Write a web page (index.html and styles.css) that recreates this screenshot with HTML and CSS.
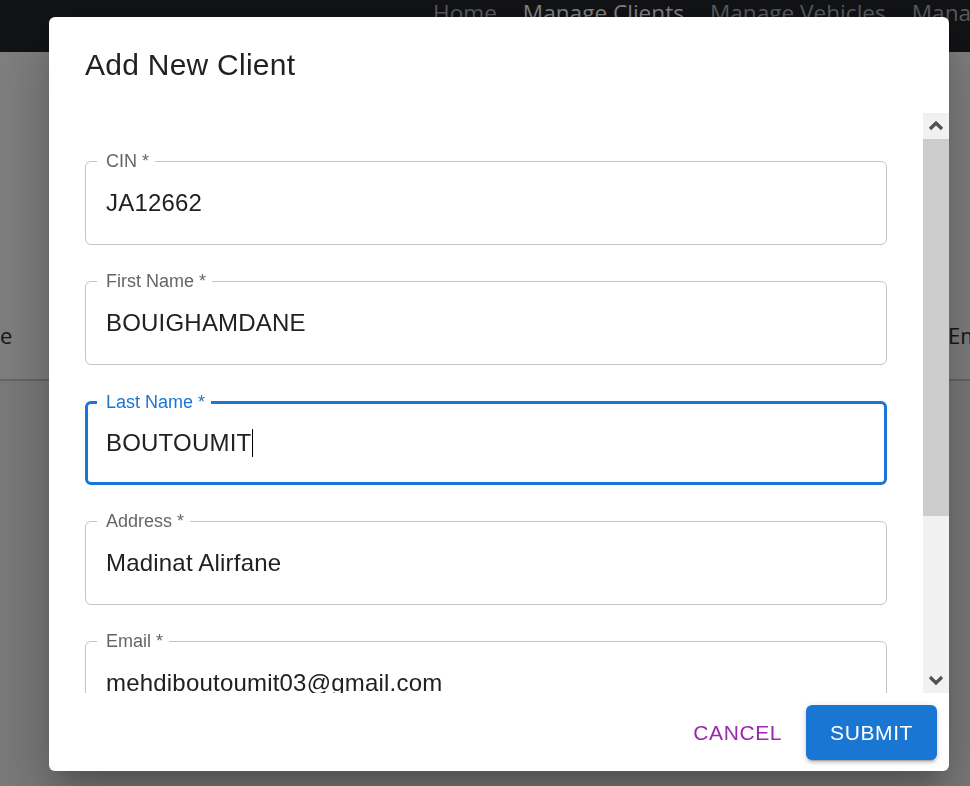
FILE: index.html
```html
<!DOCTYPE html>
<html lang="en">
<head>
<meta charset="utf-8">
<title>Add New Client</title>
<link rel="stylesheet" href="styles.css">
</head>
<body>
<div class="page">
  <header class="navbar">
    <nav class="nav">
      <span class="nav-link">Home</span>
      <span class="nav-link active">Manage Clients</span>
      <span class="nav-link">Manage Vehicles</span>
      <span class="nav-link">Manage Rentals</span>
    </nav>
  </header>
  <section class="bg-table">
    <div class="bg-row">
      <span class="bg-cell">e</span>
      <span class="bg-cell">Email</span>
    </div>
  </section>
  <section class="bg-rest"></section>
</div>

<div class="dialog" role="dialog">
  <h2 class="dialog-title">Add New Client</h2>
  <div class="dialog-body">
    <form class="fields">
      <fieldset class="outline">
        <legend class="label">CIN *</legend>
        <div class="value">JA12662</div>
      </fieldset>
      <fieldset class="outline">
        <legend class="label">First Name *</legend>
        <div class="value">BOUIGHAMDANE</div>
      </fieldset>
      <fieldset class="outline focused">
        <legend class="label">Last Name *</legend>
        <div class="value">BOUTOUMIT<span class="caret"></span></div>
      </fieldset>
      <fieldset class="outline">
        <legend class="label">Address *</legend>
        <div class="value">Madinat Alirfane</div>
      </fieldset>
      <fieldset class="outline">
        <legend class="label">Email *</legend>
        <div class="value">mehdiboutoumit03@gmail.com</div>
      </fieldset>
    </form>
    <div class="scrollbar">
      <div class="sb-btn">
        <svg width="26" height="26" viewBox="0 0 26 26"><polyline points="7,16 13,10 19,16" fill="none" stroke="#505050" stroke-width="3.2"/></svg>
      </div>
      <div class="sb-thumb"></div>
      <div class="sb-track"></div>
      <div class="sb-btn">
        <svg width="26" height="26" viewBox="0 0 26 26"><polyline points="7,10 13,16 19,10" fill="none" stroke="#505050" stroke-width="3.2"/></svg>
      </div>
    </div>
  </div>
  <div class="dialog-actions">
    <button class="btn btn-text" type="button">Cancel</button>
    <button class="btn btn-contained" type="button">Submit</button>
  </div>
</div>
</body>
</html>
```

FILE: styles.css
```css
* { box-sizing: border-box; }

html, body {
  margin: 0;
  padding: 0;
  width: 970px;
  height: 786px;
  overflow: hidden;
  background: #7c7c7c;
}

.page {
  display: flex;
  flex-direction: column;
  height: 786px;
  font-family: "Open Sans", "Liberation Sans", sans-serif;
}

.navbar {
  height: 52px;
  background: #121316;
  flex: none;
  overflow: hidden;
}

.nav {
  display: flex;
  gap: 26px;
  padding-left: 433px;
  white-space: nowrap;
  font-size: 22.6px;
  line-height: 26px;
}

.nav-link { color: #5b5b5b; }
.nav-link.active { color: #828282; }

.bg-table {
  height: 329px;
  flex: none;
  background: #808080;
  display: flex;
  align-items: flex-end;
  border-bottom: 2px solid #666666;
  overflow: hidden;
}

.bg-row {
  display: grid;
  grid-template-columns: 948px 200px;
  padding-bottom: 29px;
  font-size: 22px;
  line-height: 30px;
  color: #161616;
  white-space: nowrap;
}

.bg-rest {
  flex: 1;
  background: #7b7b7b;
}

/* Dialog (overlay) */
.dialog {
  position: fixed;
  left: 49px;
  top: 17px;
  width: 900px;
  height: 754px;
  background: #ffffff;
  border-radius: 6px;
  display: flex;
  flex-direction: column;
  overflow: hidden;
  font-family: "Liberation Sans", Arial, sans-serif;
  box-shadow:
    0 16px 22px -10px rgba(0,0,0,0.2),
    0 36px 57px 4px rgba(0,0,0,0.14),
    0 13px 69px 12px rgba(0,0,0,0.12);
}

.dialog-title {
  margin: 0;
  padding: 24px 36px;
  font-size: 30px;
  line-height: 48px;
  font-weight: 400;
  letter-spacing: 0.25px;
  color: #212121;
  flex: none;
}

.dialog-body {
  height: 580px;
  flex: none;
  display: flex;
}

.fields {
  flex: 1;
  margin: 0;
  padding: 39px 36px 0;
  display: flex;
  flex-direction: column;
  gap: 27px;
  overflow: hidden;
}

.outline {
  margin: 0;
  padding: 0 0 8px 11px;
  border: 1px solid #c4c4c4;
  border-radius: 6px;
  flex: none;
  min-width: 0;
}

.label {
  padding: 0 6px 0 9px;
  font-size: 18px;
  line-height: 18px;
  color: #666666;
  white-space: nowrap;
}

.value {
  height: 66px;
  margin-left: 9px;
  display: flex;
  align-items: center;
  font-size: 24px;
  color: #212121;
  letter-spacing: 0.2px;
  white-space: nowrap;
}

.outline.focused {
  border: 3px solid #1976d2;
  padding: 0 0 9px 9px;
}

.outline.focused .label {
  color: #1976d2;
  line-height: 21px;
}

.outline.focused .value {
  height: 60px;
}

.caret {
  display: inline-block;
  width: 1px;
  height: 28px;
  margin-left: 1px;
  background: #000000;
}

/* Scrollbar drawn as a column */
.scrollbar {
  width: 26px;
  flex: none;
  display: flex;
  flex-direction: column;
  background: #f1f1f1;
}

.sb-btn {
  height: 26px;
  flex: none;
  display: flex;
}

.sb-thumb {
  height: 377px;
  flex: none;
  background: #cdcdcd;
}

.sb-track { flex: 1; }

.dialog-actions {
  flex: 1;
  display: flex;
  justify-content: flex-end;
  align-items: center;
  gap: 12px;
  padding: 12px;
}

.btn {
  font-family: "Liberation Sans", Arial, sans-serif;
  font-size: 21px;
  line-height: 37px;
  letter-spacing: 0.6px;
  text-transform: uppercase;
  border: 0;
  border-radius: 6px;
  padding: 9px 12px;
  background: transparent;
  cursor: pointer;
}

.btn-text {
  color: #9c27b0;
}

.btn-contained {
  padding: 9px 24px;
  background: #1976d2;
  color: #ffffff;
  box-shadow:
    0 4px 1px -3px rgba(0,0,0,0.2),
    0 3px 3px 0 rgba(0,0,0,0.14),
    0 1px 7px 0 rgba(0,0,0,0.12);
}
```
